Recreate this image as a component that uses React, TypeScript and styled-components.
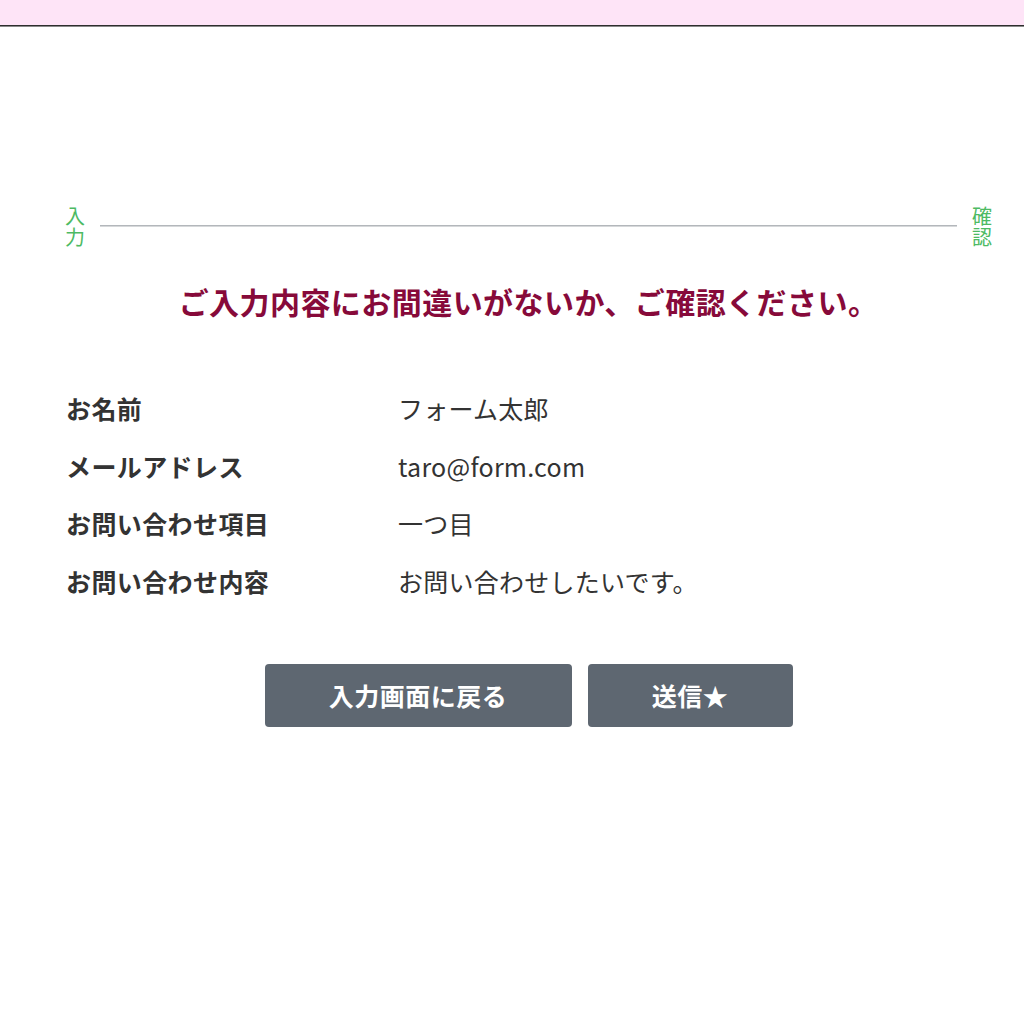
import React from "react";
import styled, { createGlobalStyle } from "styled-components";

const GlobalStyle = createGlobalStyle`
  html, body {
    margin: 0;
    padding: 0;
    background: #ffffff;
  }
  body {
    font-family: "Noto Sans CJK JP", "Noto Sans", sans-serif;
    color: #333333;
  }
`;

const Page = styled.div`
  width: 1024px;
  min-height: 1016px;
  background: #ffffff;
`;

const Header = styled.header`
  height: 25px;
  background: #fee4f7;
  border-bottom: 1px solid #2e2e2e;
  box-shadow: 0 1px 0 #8a8a8a;
`;

const Main = styled.main`
  padding: 179px 32px 0 65px;
  display: flex;
  flex-direction: column;
`;

const Steps = styled.div`
  display: flex;
  align-items: center;
  gap: 15px;
`;

const StepLabel = styled.div`
  width: 20px;
  font-size: 20px;
  line-height: 21px;
  color: #4dba63;
  word-break: break-all;
`;

const StepLine = styled.div`
  flex: 1;
  height: 1px;
  background: #b3b7bb;
  border-bottom: 1px solid #d6d8da;
`;

const Title = styled.h1`
  margin: 34px 0 0;
  text-align: center;
  font-size: 30px;
  line-height: 40px;
  font-weight: 700;
  letter-spacing: 0.015em;
  color: #870a3a;
`;

const Table = styled.dl`
  margin: 69px 0 0;
  padding-left: 1px;
  display: grid;
  grid-template-columns: 332px 1fr;
  row-gap: 21.5px;
`;

const Label = styled.dt`
  font-size: 25px;
  line-height: 36px;
  font-weight: 700;
  letter-spacing: 0.4px;
  color: #333333;
`;

const Value = styled.dd`
  margin: 0;
  font-size: 25px;
  line-height: 36px;
  font-weight: 400;
  letter-spacing: 0.25px;
  color: #333333;
`;

const Actions = styled.div`
  margin-top: 65px;
  display: flex;
  justify-content: center;
  gap: 16px;
`;

const Button = styled.button<{ $width: number }>`
  width: ${(p) => p.$width}px;
  height: 63px;
  border: none;
  border-radius: 4px;
  background: #5e6771;
  color: #ffffff;
  font-family: "Noto Sans CJK JP", "Noto Sans", sans-serif;
  font-size: 25px;
  font-weight: 700;
  letter-spacing: 0.02em;
  cursor: pointer;
`;

const rows: [string, string][] = [
  ["お名前", "フォーム太郎"],
  ["メールアドレス", "taro@form.com"],
  ["お問い合わせ項目", "一つ目"],
  ["お問い合わせ内容", "お問い合わせしたいです。"],
];

export default function App() {
  return (
    <Page>
      <GlobalStyle />
      <Header />
      <Main>
        <Steps>
          <StepLabel>入力</StepLabel>
          <StepLine />
          <StepLabel>確認</StepLabel>
        </Steps>
        <Title>ご入力内容にお間違いがないか、ご確認ください。</Title>
        <Table>
          {rows.map(([label, value]) => (
            <React.Fragment key={label}>
              <Label>{label}</Label>
              <Value>{value}</Value>
            </React.Fragment>
          ))}
        </Table>
        <Actions>
          <Button $width={307}>入力画面に戻る</Button>
          <Button $width={205}>送信★</Button>
        </Actions>
      </Main>
    </Page>
  );
}
